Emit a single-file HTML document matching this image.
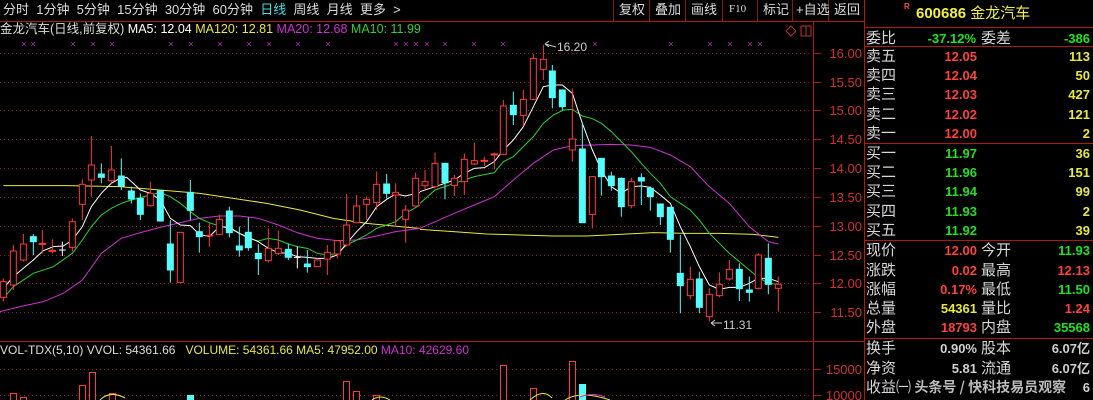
<!DOCTYPE html>
<html><head><meta charset="utf-8"><style>
*{margin:0;padding:0;box-sizing:border-box}
body{width:1093px;height:400px;background:#000;overflow:hidden;position:relative;font-family:"Liberation Sans","Noto Sans CJK SC",sans-serif;color:#ddd}
.t{position:absolute;white-space:nowrap;line-height:1}
.rp .l{position:absolute;font-size:15px;color:#d8d8d8;font-family:"Noto Sans CJK SC","WenQuanYi Zen Hei",sans-serif;line-height:1}
.rp .v{position:absolute;font-size:13px;font-weight:bold;text-align:right;line-height:1}
.r{color:#ff4040}.g{color:#20e020}.y{color:#e8e840}.w{color:#d0d0d0}
</style></head><body>
<svg width="1093" height="400" style="position:absolute;left:0;top:0">
<!-- top bar -->
<line x1="0" y1="21.5" x2="865" y2="21.5" stroke="#b01818"/>
<g stroke="#8a1818"><line x1="613.5" y1="0" x2="613.5" y2="21"/><line x1="649.5" y1="0" x2="649.5" y2="21"/><line x1="685.5" y1="0" x2="685.5" y2="21"/><line x1="722.5" y1="0" x2="722.5" y2="21"/><line x1="757.5" y1="0" x2="757.5" y2="21"/><line x1="792.5" y1="0" x2="792.5" y2="21"/><line x1="828.5" y1="0" x2="828.5" y2="21"/></g>
<line x1="864.5" y1="0" x2="864.5" y2="400" stroke="#b01818"/>
<line x1="813.5" y1="21" x2="813.5" y2="400" stroke="#b01818"/>
<line x1="0" y1="341.5" x2="864" y2="341.5" stroke="#b01818"/>
<!-- right panel lines -->
<g stroke="#b01818"><line x1="865" y1="27.5" x2="1093" y2="27.5"/><line x1="865" y1="46.5" x2="1093" y2="46.5"/><line x1="865" y1="143.5" x2="1093" y2="143.5"/><line x1="865" y1="240.5" x2="1093" y2="240.5"/><line x1="865" y1="338.5" x2="1093" y2="338.5"/></g>
<!-- grid -->
<g stroke="#8a2020" stroke-dasharray="1,3">
<line x1="0" y1="53.5" x2="812" y2="53.5"/><line x1="0" y1="82.5" x2="812" y2="82.5"/><line x1="0" y1="110.5" x2="812" y2="110.5"/><line x1="0" y1="139.5" x2="812" y2="139.5"/><line x1="0" y1="168.5" x2="812" y2="168.5"/><line x1="0" y1="197.5" x2="812" y2="197.5"/><line x1="0" y1="226.5" x2="812" y2="226.5"/><line x1="0" y1="255.5" x2="812" y2="255.5"/><line x1="0" y1="283.5" x2="812" y2="283.5"/><line x1="0" y1="312.5" x2="812" y2="312.5"/>
<line x1="0" y1="369.5" x2="812" y2="369.5"/><line x1="0" y1="395.5" x2="812" y2="395.5"/>
</g>
<g stroke="#b01818"><line x1="814" y1="53.5" x2="821" y2="53.5"/><line x1="814" y1="82.5" x2="821" y2="82.5"/><line x1="814" y1="110.5" x2="821" y2="110.5"/><line x1="814" y1="139.5" x2="821" y2="139.5"/><line x1="814" y1="168.5" x2="821" y2="168.5"/><line x1="814" y1="197.5" x2="821" y2="197.5"/><line x1="814" y1="226.5" x2="821" y2="226.5"/><line x1="814" y1="255.5" x2="821" y2="255.5"/><line x1="814" y1="283.5" x2="821" y2="283.5"/><line x1="814" y1="312.5" x2="821" y2="312.5"/><line x1="814" y1="369.5" x2="821" y2="369.5"/><line x1="814" y1="395.5" x2="821" y2="395.5"/></g>
<g fill="#d03030" font-size="13" font-family="Liberation Sans,sans-serif" text-anchor="end">
<text x="862" y="58">16.00</text><text x="862" y="87">15.50</text><text x="862" y="115">15.00</text><text x="862" y="144">14.50</text><text x="862" y="173">14.00</text><text x="862" y="202">13.50</text><text x="862" y="231">13.00</text><text x="862" y="260">12.50</text><text x="862" y="288">12.00</text><text x="862" y="317">11.50</text><text x="862" y="374">15000</text><text x="862" y="400">10000</text>
</g>
<!-- icons -->
<path d="M791 26 L796 31 L791 36 L786 31 Z" fill="none" stroke="#c03030"/>
<rect x="801" y="26" width="10" height="10" fill="none" stroke="#c03030"/><line x1="806" y1="26" x2="806" y2="36" stroke="#c03030"/>
<!-- x markers -->
<g fill="#d030d0" font-size="9" font-family="Liberation Sans,sans-serif" text-anchor="middle">
<text x="24" y="47">×</text><text x="33" y="47">×</text><text x="73" y="47">×</text><text x="93" y="47">×</text><text x="112" y="47">×</text><text x="171" y="47">×</text><text x="191" y="47">×</text><text x="220" y="47">×</text><text x="249" y="47">×</text><text x="269" y="47">×</text><text x="298" y="47">×</text><text x="328" y="47">×</text><text x="396" y="47">×</text><text x="406" y="47">×</text><text x="416" y="47">×</text><text x="427" y="47">×</text><text x="445" y="47">×</text><text x="474" y="47">×</text><text x="503" y="47">×</text><text x="595" y="47">×</text><text x="671" y="47">×</text><text x="710" y="47">×</text><text x="730" y="47">×</text><text x="750" y="47">×</text><text x="760" y="47">×</text>
</g>
<!-- left half in zoom coords -->
<g transform="translate(0,40) scale(0.33333)" stroke-width="3" fill="none">
<polyline stroke="#e8e840" points="10,437 60,437 200,437 360,440 480,450 600,460 700,475 800,490 900,510 1000,535 1100,550 1200,560 1260,565"/>
<polyline stroke="#d030d0" points="0,815 60,800 130,785 190,760 247,720 304,640 364,595 421,578 481,562 541,548 598,535 658,528 718,528 775,535 835,555 892,578 952,595 1012,602 1070,600 1130,588 1187,575 1260,565"/>
<polyline stroke="#30d030" points="10,775 40,740 100,700 160,680 217,640 247,600 274,560 304,525 334,505 364,490 394,480 451,465 481,458 511,470 541,490 571,515 598,535 628,548 658,558 688,565 718,580 745,595 775,603 805,595 835,600 865,612 892,620 922,625 952,640 982,645 1012,640 1040,615 1070,600 1100,585 1130,565 1160,555 1187,545 1217,520 1260,495"/>
<polyline stroke="#ffffff" points="10,745 40,710 100,660 130,632 160,620 190,618 217,600 247,560 274,500 304,460 334,430 360,415 380,412 400,430 421,450 451,460 481,480 511,535 541,555 571,557 598,583 628,590 658,560 688,562 718,580 745,592 775,605 805,625 835,638 865,640 892,650 922,652 952,655 982,655 1012,645 1040,610 1070,575 1100,545 1130,500 1160,478 1187,462 1217,468 1247,460 1260,458"/>
<g stroke="#ff3a3a">
<path d="M10 715V785M40 615V750M70 582V665M127 570V640M157 598V640M217 535V635M247 418V540M274 288V470M334 318V430M451 425V500M541 577V727M628 550V620M658 525V585M805 565V668M835 572V645M952 655V680M982 615V705M1012 600V655M1040 462V620M1070 465V550M1100 470V540M1130 395V510M1187 430V560M1217 495V608M1247 398V500"/>
<g fill="#000"><rect x="1" y="725" width="18" height="47"/><rect x="31" y="633" width="18" height="102"/><rect x="61" y="612" width="18" height="48"/><rect x="117" y="610" width="20" height="3"/><rect x="147" y="631" width="20" height="3"/><rect x="208" y="545" width="18" height="77"/><rect x="238" y="433" width="18" height="60"/><rect x="265" y="375" width="18" height="45"/><rect x="325" y="390" width="18" height="32"/><rect x="442" y="460" width="18" height="37"/><rect x="532" y="577" width="18" height="150"/><rect x="618" y="586" width="20" height="2"/><rect x="649" y="538" width="18" height="45"/><rect x="796" y="625" width="18" height="37"/><rect x="826" y="625" width="18" height="15"/><rect x="943" y="660" width="18" height="20"/><rect x="973" y="637" width="18" height="20"/><rect x="1003" y="602" width="18" height="40"/><rect x="1031" y="555" width="18" height="60"/><rect x="1061" y="498" width="18" height="50"/><rect x="1091" y="478" width="18" height="15"/><rect x="1121" y="433" width="18" height="55"/><rect x="1178" y="457" width="18" height="8"/><rect x="1208" y="510" width="18" height="28"/><rect x="1238" y="415" width="18" height="83"/></g>
</g>
<path stroke="#fff" d="M187 605V648M177 630H197M892 620V685M882 652H902"/>
<g stroke="#54fcfc">
<path d="M100 582V645M304 370V430M364 355V450M394 440V490M421 460V540M481 450V545M511 540V728M571 420V540M598 548V638M688 500V592M718 560V650M745 532V632M775 612V705M865 610V660M922 630V698M1160 402V475"/>
<g fill="#54fcfc"><rect x="91" y="590" width="18" height="15"/><rect x="295" y="402" width="18" height="10"/><rect x="355" y="408" width="18" height="30"/><rect x="385" y="453" width="18" height="24"/><rect x="412" y="475" width="18" height="48"/><rect x="472" y="453" width="18" height="90"/><rect x="502" y="612" width="18" height="78"/><rect x="562" y="457" width="18" height="54"/><rect x="589" y="575" width="18" height="15"/><rect x="679" y="513" width="18" height="65"/><rect x="709" y="618" width="18" height="12"/><rect x="736" y="577" width="18" height="46"/><rect x="766" y="640" width="18" height="16"/><rect x="856" y="628" width="18" height="24"/><rect x="913" y="672" width="18" height="8"/><rect x="1151" y="432" width="18" height="28"/></g>
</g>
</g>
<!-- right half -->
<g transform="translate(420,40) scale(0.33333)" stroke-width="3" fill="none">
<polyline stroke="#e8e840" points="0,568 100,575 200,582 300,585 400,588 500,588 600,583 700,578 800,580 900,580 1000,583 1075,592"/>
<polyline stroke="#d030d0" points="0,565 103,520 163,495 223,470 280,420 340,370 400,330 457,317 517,315 574,313 634,315 691,322 751,345 811,380 868,440 928,490 988,560 1045,605 1075,612"/>
<polyline stroke="#30d030" points="0,490 45,450 103,430 163,410 223,398 250,365 280,350 310,320 340,290 370,250 400,225 430,210 457,208 487,228 517,236 544,250 574,275 604,305 634,335 664,370 691,400 721,430 751,470 781,490 811,510 838,540 868,580 898,610 928,640 958,665 988,690 1015,712 1045,730 1075,733"/>
<polyline stroke="#ffffff" points="0,455 45,440 75,430 103,420 133,400 163,385 193,383 223,365 250,330 280,300 310,260 340,200 370,140 397,135 427,135 457,160 487,250 517,330 544,390 574,440 604,460 634,440 664,438 691,442 721,465 751,490 781,560 811,620 838,680 868,735 898,748 928,742 958,742 988,730 1015,715 1045,715 1075,725"/>
<g stroke="#ff3a3a">
<path d="M15 390V450M45 338V445M103 405V468M133 340V465M163 308V375M193 350V378M223 338V388M250 180V345M310 150V258M340 42V180M370 15V120M457 145V365M517 408V565M634 413V505M811 680V778M868 745V845M898 697V772M928 660V722M1015 640V748M1075 710V815"/>
<g fill="#000"><rect x="6" y="425" width="18" height="12"/><rect x="36" y="370" width="18" height="70"/><rect x="94" y="415" width="18" height="21"/><rect x="124" y="358" width="18" height="67"/><rect x="154" y="362" width="18" height="10"/><rect x="183" y="361" width="20" height="3"/><rect x="213" y="342" width="20" height="3"/><rect x="241" y="198" width="18" height="145"/><rect x="301" y="178" width="18" height="48"/><rect x="331" y="55" width="18" height="123"/><rect x="361" y="58" width="18" height="30"/><rect x="448" y="297" width="18" height="33"/><rect x="508" y="410" width="18" height="113"/><rect x="625" y="425" width="18" height="72"/><rect x="802" y="718" width="18" height="49"/><rect x="859" y="763" width="18" height="67"/><rect x="889" y="733" width="18" height="34"/><rect x="919" y="688" width="18" height="29"/><rect x="1006" y="645" width="18" height="100"/><rect x="1066" y="733" width="18" height="12"/></g>
</g>
<g stroke="#54fcfc">
<path d="M75 370V478M280 155V255M397 75V205M427 148V212M487 250V548M544 355V467M574 395V452M604 412V530M664 400V495M691 440V512M721 490V555M751 500V638M781 585V820M838 695V820M958 670V783M988 710V785M1045 610V763"/>
<g fill="#54fcfc"><rect x="66" y="370" width="18" height="58"/><rect x="271" y="196" width="18" height="28"/><rect x="388" y="93" width="18" height="80"/><rect x="418" y="150" width="18" height="50"/><rect x="478" y="327" width="18" height="221"/><rect x="535" y="355" width="18" height="55"/><rect x="565" y="408" width="18" height="29"/><rect x="595" y="415" width="18" height="85"/><rect x="655" y="413" width="18" height="10"/><rect x="682" y="445" width="18" height="25"/><rect x="712" y="492" width="18" height="38"/><rect x="742" y="502" width="18" height="96"/><rect x="772" y="700" width="18" height="37"/><rect x="829" y="717" width="18" height="85"/><rect x="949" y="688" width="18" height="58"/><rect x="979" y="750" width="18" height="7"/><rect x="1036" y="655" width="18" height="78"/></g>
</g>
</g>
<!-- extreme labels -->
<path d="M545 44 L556 47 M545 44 L549 41 M545 44 L549 47" stroke="#ccc" fill="none"/>
<text x="557" y="51" fill="#ccc" font-size="12" font-family="Liberation Sans,sans-serif">16.20</text>
<path d="M711 323 L722 323 M711 323 L715 320 M711 323 L715 326" stroke="#ccc" fill="none"/>
<text x="723" y="329" fill="#ccc" font-size="12" font-family="Liberation Sans,sans-serif">11.31</text>
<!-- volume bars -->
<g stroke="#ff3a3a" fill="#000">
<rect x="10.5" y="393.5" width="6" height="10"/><rect x="20.5" y="397.5" width="6" height="10"/><rect x="79.5" y="385.5" width="6" height="20"/><rect x="89.5" y="372.5" width="6" height="30"/><rect x="109.5" y="393.5" width="6" height="10"/><rect x="343.5" y="381.5" width="6" height="25"/><rect x="353.5" y="391.5" width="6" height="15"/><rect x="373.5" y="395.5" width="6" height="10"/><rect x="500.5" y="365.5" width="6" height="40"/><rect x="530.5" y="388.5" width="6" height="20"/><rect x="569.5" y="361.5" width="6" height="40"/>
</g>
<rect x="187" y="395" width="7" height="10" fill="#54fcfc"/><rect x="579" y="384" width="7" height="20" fill="#54fcfc"/>
<path d="M100 400 Q110 390 125 398 M372 400 Q380 394 390 400 M530 400 Q543 388 552 398 M565 400 Q580 390 610 400" stroke="#e8e840" fill="none"/>
<path d="M580 397 Q592 392 605 397" stroke="#d030d0" fill="none"/>
</svg>
<!-- top bar text -->
<div class="t" style="left:3px;top:3px;font-size:13px;color:#ddd;font-family:'Liberation Sans','Noto Sans CJK SC',sans-serif">分时&nbsp;&nbsp;1分钟&nbsp;&nbsp;5分钟&nbsp;&nbsp;15分钟&nbsp;&nbsp;30分钟&nbsp;&nbsp;60分钟&nbsp;&nbsp;<span style="color:#40e0e0">日线</span>&nbsp;&nbsp;周线&nbsp;&nbsp;月线&nbsp;&nbsp;更多&nbsp;&nbsp;&gt;</div>
<div class="t" style="left:619px;top:3px;font-size:13px;color:#ddd">复权</div>
<div class="t" style="left:655px;top:3px;font-size:13px;color:#ddd">叠加</div>
<div class="t" style="left:691px;top:3px;font-size:13px;color:#ddd">画线</div>
<div class="t" style="left:729px;top:4px;font-size:11px;color:#ddd;font-family:'Liberation Serif',serif">F10</div>
<div class="t" style="left:763px;top:3px;font-size:13px;color:#ddd">标记</div>
<div class="t" style="left:796px;top:3px;font-size:13px;color:#ddd">+自选</div>
<div class="t" style="left:834px;top:3px;font-size:13px;color:#ddd">返回</div>
<div class="t" style="left:0;top:23px;font-size:12.5px"><span style="color:#ddd">金龙汽车(日线,前复权)</span> <span style="color:#fff">MA5: 12.04</span> <span style="color:#e8e840">MA120: 12.81</span> <span style="color:#d030d0">MA20: 12.68</span> <span style="color:#30d030">MA10: 11.99</span></div>
<div class="t" style="left:0;top:344px;font-size:12px"><span style="color:#ddd">VOL-TDX(5,10) VVOL: 54361.66</span>&nbsp;&nbsp; <span style="color:#e8e840">VOLUME: 54361.66 MA5: 47952.00</span> <span style="color:#d030d0">MA10: 42629.60</span></div>
<!-- right panel -->
<div class="rp">
<div class="t" style="left:904px;top:3px;font-size:8px;color:#ff5050;font-weight:bold">R</div>
<div class="t" style="left:916px;top:6px;font-size:15px;color:#f0f040"><b>600686</b> 金龙汽车</div>
<div class="l" style="left:866px;top:30px">委比</div><div class="v g" style="right:117px;top:32px">-37.12%</div><div class="l" style="left:981px;top:30px">委差</div><div class="v g" style="right:3px;top:32px">-386</div>

<div class="l" style="left:866px;top:48px">卖五</div><div class="v r" style="right:116px;top:50px">12.05</div><div class="v y" style="right:3px;top:50px">113</div>
<div class="l" style="left:866px;top:67px">卖四</div><div class="v r" style="right:116px;top:69px">12.04</div><div class="v y" style="right:3px;top:69px">50</div>
<div class="l" style="left:866px;top:86px">卖三</div><div class="v r" style="right:116px;top:88px">12.03</div><div class="v y" style="right:3px;top:88px">427</div>
<div class="l" style="left:866px;top:106px">卖二</div><div class="v r" style="right:116px;top:108px">12.02</div><div class="v y" style="right:3px;top:108px">121</div>
<div class="l" style="left:866px;top:125px">卖一</div><div class="v r" style="right:116px;top:127px">12.00</div><div class="v y" style="right:3px;top:127px">2</div>

<div class="l" style="left:866px;top:145px">买一</div><div class="v g" style="right:116px;top:147px">11.97</div><div class="v y" style="right:3px;top:147px">36</div>
<div class="l" style="left:866px;top:164px">买二</div><div class="v g" style="right:116px;top:166px">11.96</div><div class="v y" style="right:3px;top:166px">151</div>
<div class="l" style="left:866px;top:183px">买三</div><div class="v g" style="right:116px;top:185px">11.94</div><div class="v y" style="right:3px;top:185px">99</div>
<div class="l" style="left:866px;top:203px">买四</div><div class="v g" style="right:116px;top:205px">11.93</div><div class="v y" style="right:3px;top:205px">2</div>
<div class="l" style="left:866px;top:222px">买五</div><div class="v g" style="right:116px;top:224px">11.92</div><div class="v y" style="right:3px;top:224px">39</div>

<div class="l" style="left:866px;top:242px">现价</div><div class="v r" style="right:116px;top:244px">12.00</div><div class="l" style="left:981px;top:242px">今开</div><div class="v g" style="right:3px;top:244px">11.93</div>
<div class="l" style="left:866px;top:262px">涨跌</div><div class="v r" style="right:116px;top:264px">0.02</div><div class="l" style="left:981px;top:262px">最高</div><div class="v r" style="right:3px;top:264px">12.13</div>
<div class="l" style="left:866px;top:281px">涨幅</div><div class="v r" style="right:116px;top:283px">0.17%</div><div class="l" style="left:981px;top:281px">最低</div><div class="v g" style="right:3px;top:283px">11.50</div>
<div class="l" style="left:866px;top:300px">总量</div><div class="v y" style="right:116px;top:302px">54361</div><div class="l" style="left:981px;top:300px">量比</div><div class="v r" style="right:3px;top:302px">1.24</div>
<div class="l" style="left:866px;top:319px">外盘</div><div class="v r" style="right:116px;top:321px">18793</div><div class="l" style="left:981px;top:319px">内盘</div><div class="v g" style="right:3px;top:321px">35568</div>

<div class="l" style="left:866px;top:340px">换手</div><div class="v w" style="right:116px;top:342px">0.90%</div><div class="l" style="left:981px;top:340px">股本</div><div class="v w" style="right:3px;top:342px">6.07亿</div>
<div class="l" style="left:866px;top:360px">净资</div><div class="v w" style="right:116px;top:362px">5.81</div><div class="l" style="left:981px;top:360px">流通</div><div class="v w" style="right:3px;top:362px">6.07亿</div>
<div class="l" style="left:866px;top:379px">收益㈠ <span style="color:#bbb;font-size:14px;font-weight:bold">头条号 / 快科技易员观察</span></div><div class="v w" style="right:3px;top:381px">6</div>
</div>
</body></html>
